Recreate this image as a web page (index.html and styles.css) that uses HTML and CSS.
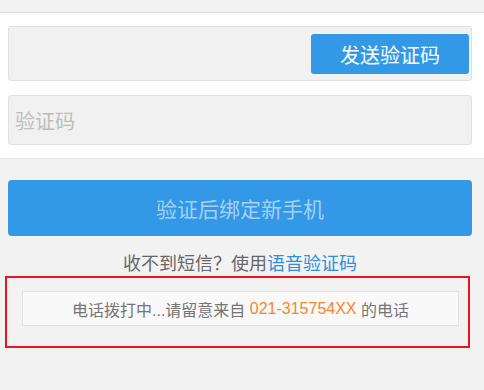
FILE: index.html
```html
<!DOCTYPE html>
<html lang="zh">
<head>
<meta charset="utf-8">
<link rel="stylesheet" href="styles.css">
</head>
<body>
<div class="topband"></div>
<section class="form">
  <div class="field field-send">
    <button class="send-btn">发送验证码</button>
  </div>
  <div class="field field-code">
    <span class="placeholder">验证码</span>
  </div>
</section>
<div class="actions">
  <button class="main-btn">验证后绑定新手机</button>
  <p class="hint">收不到短信？使用<a class="link">语音验证码</a></p>
  <div class="highlight">
    <div class="notice">电话拨打中...请留意来自 <span class="phone">021-315754XX</span> 的电话</div>
  </div>
</div>
</body>
</html>
```

FILE: styles.css
```css
* { box-sizing: border-box; }
html, body {
  margin: 0;
  padding: 0;
  background: #f2f2f2;
  font-family: "Liberation Sans", "Noto Sans CJK SC", sans-serif;
}
.topband {
  height: 12px;
  background: #f2f2f2;
}
.form {
  background: #ffffff;
  border-top: 1px solid #dedede;
  border-bottom: 1px solid #e6e6e6;
  padding: 13px 12px 13px 8px;
  display: flex;
  flex-direction: column;
  gap: 14px;
}
.field {
  background: #f1f1f1;
  border: 1px solid #e0e0e0;
  border-radius: 3px;
  display: flex;
  align-items: center;
}
.field-send {
  height: 55px;
  justify-content: flex-end;
  padding: 7px 2px 6px 0;
}
.send-btn {
  width: 158px;
  height: 40px;
  border: none;
  border-radius: 3px;
  background: #3399e6;
  color: #ffffff;
  font-family: "Liberation Sans", "Noto Sans CJK SC", sans-serif;
  font-size: 20px;
  padding: 0;
}
.field-code {
  height: 50px;
  padding-left: 6px;
}
.placeholder {
  color: #bdbdbd;
  font-size: 20px;
}
.actions {
  padding: 21px 12px 0 8px;
  display: flex;
  flex-direction: column;
}
.main-btn {
  height: 56px;
  border: none;
  border-radius: 4px;
  background: #3399e6;
  color: #a6d0f2;
  font-family: "Liberation Sans", "Noto Sans CJK SC", sans-serif;
  font-size: 21px;
  padding: 0;
}
.hint {
  margin: 16px 0 0 0;
  text-align: center;
  font-size: 18px;
  line-height: 24px;
  color: #666666;
}
.link {
  color: #2f8fd8;
}
.highlight {
  margin-left: -3px;
  margin-right: 2px;
  border: 2px solid #e8141e;
  padding: 13px 9px 20px 15px;
}
.notice {
  height: 35px;
  background: #f9f9f9;
  border: 1px solid #e2e2e2;
  display: flex;
  align-items: center;
  justify-content: center;
  font-size: 16px;
  color: #757575;
  white-space: pre;
}
.phone {
  color: #f7852b;
}
```
